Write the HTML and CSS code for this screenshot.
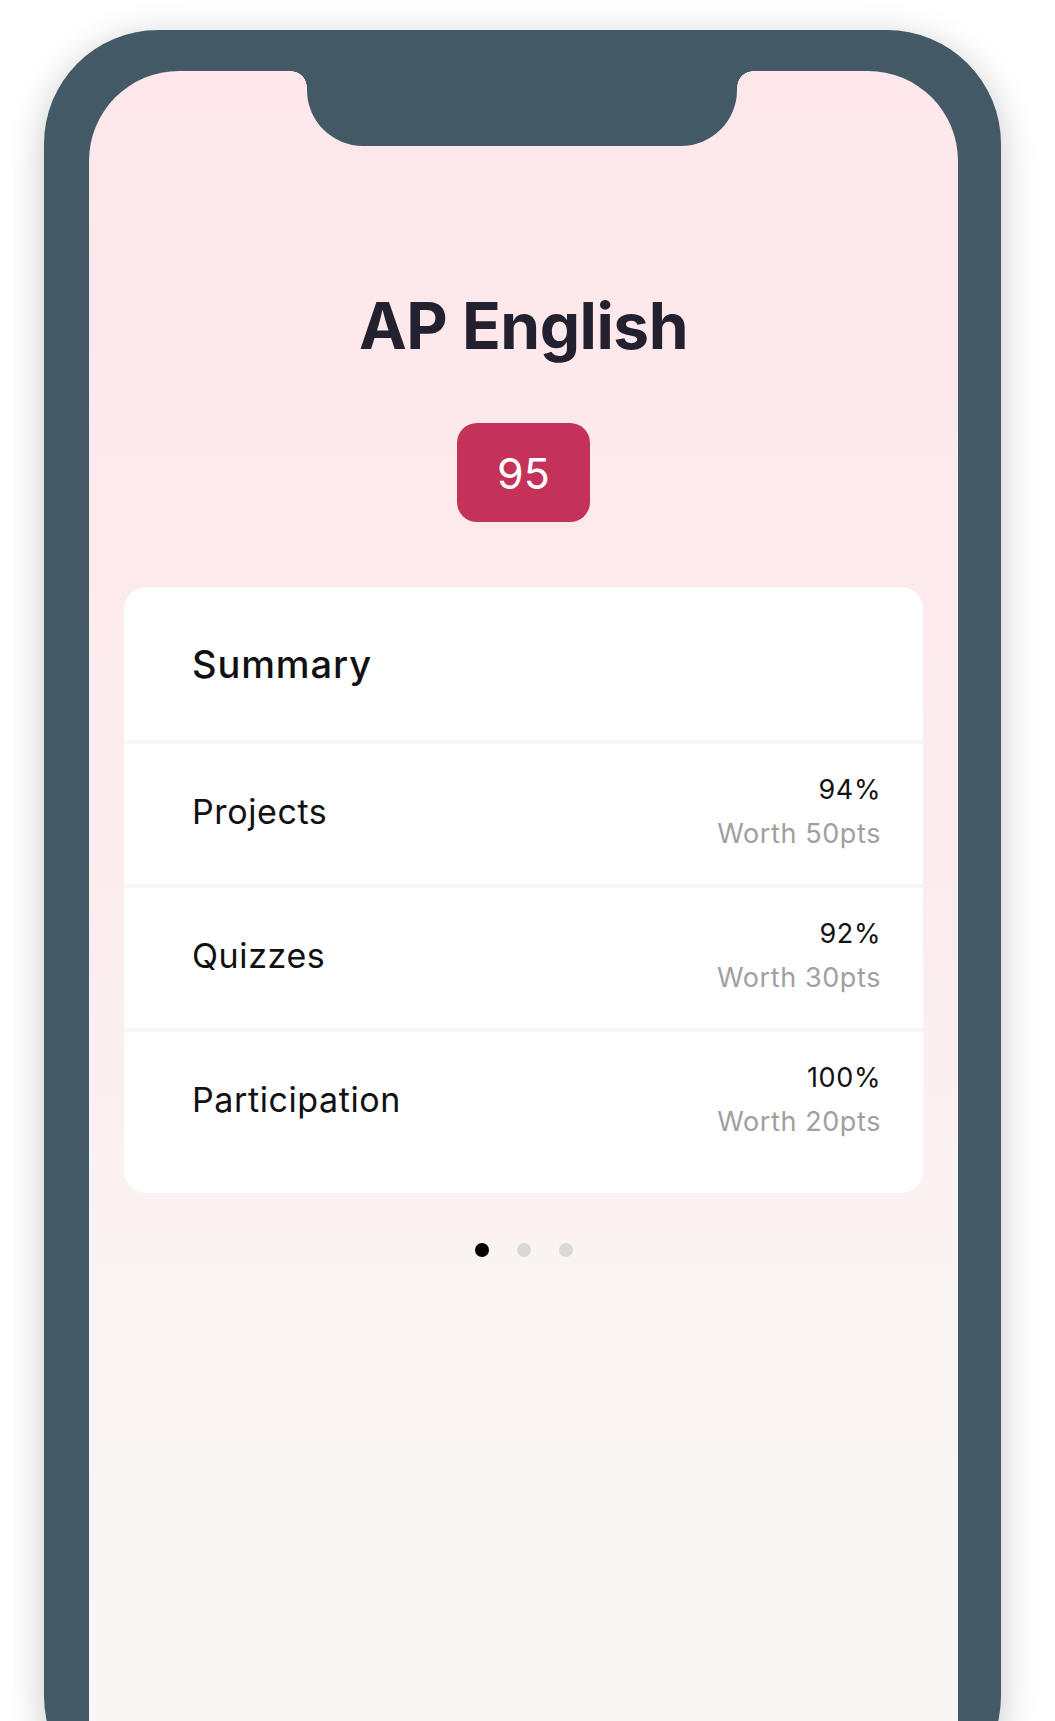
FILE: index.html
```html
<!DOCTYPE html>
<html lang="en">
<head>
<meta charset="utf-8">
<title>AP English</title>
<link rel="stylesheet" href="styles.css">
</head>
<body>
<div class="phone">
  <div class="screen">
    <div class="notch"></div>
    <h1 class="title">AP English</h1>
    <div class="badge">95</div>
    <section class="card">
      <div class="card-head">Summary</div>
      <div class="row">
        <span class="label">Projects</span>
        <div class="meta"><span class="pct">94%</span><span class="worth">Worth 50pts</span></div>
      </div>
      <div class="row">
        <span class="label">Quizzes</span>
        <div class="meta"><span class="pct">92%</span><span class="worth">Worth 30pts</span></div>
      </div>
      <div class="row">
        <span class="label">Participation</span>
        <div class="meta"><span class="pct">100%</span><span class="worth">Worth 20pts</span></div>
      </div>
    </section>
    <div class="dots">
      <span class="dot active"></span>
      <span class="dot"></span>
      <span class="dot"></span>
    </div>
  </div>
</div>
</body>
</html>
```

FILE: styles.css
```css
html, body {
  margin: 0;
  padding: 0;
  height: 1721px;
  overflow: hidden;
  background: #ffffff;
  font-family: Inter, "Noto Sans", sans-serif;
}

.phone {
  margin: 30px 0 0 44px;
  width: 957px;
  height: 1780px;
  box-sizing: border-box;
  padding: 41px 43px 0 45px;
  background: #435a66;
  border-radius: 114px;
  box-shadow: 0 8px 36px rgba(0, 0, 0, 0.22);
}

.screen {
  position: relative;
  height: 100%;
  border-radius: 90px;
  background: linear-gradient(180deg, #fde7ea 0%, #fceced 45%, #faf4f3 70%, #f9f7f6 100%);
  display: flex;
  flex-direction: column;
  align-items: center;
}

.notch {
  position: absolute;
  top: 0;
  left: 218px;
  width: 430px;
  height: 75px;
  background: #435a66;
  border-radius: 0 0 56px 56px;
}
.notch::before,
.notch::after {
  content: "";
  position: absolute;
  top: 0;
  width: 16px;
  height: 16px;
}
.notch::before {
  left: -16px;
  background: radial-gradient(circle at 0 100%, transparent 15.5px, #435a66 16px);
}
.notch::after {
  right: -16px;
  background: radial-gradient(circle at 100% 100%, transparent 15.5px, #435a66 16px);
}

.title {
  margin: 215px 0 0;
  font-size: 64px;
  line-height: 80px;
  font-weight: 700;
  color: #23202f;
  letter-spacing: -0.5px;
}

.badge {
  margin-top: 57px;
  width: 133px;
  height: 99px;
  border-radius: 20px;
  background: #c43159;
  color: #ffffff;
  font-size: 43px;
  display: flex;
  align-items: center;
  justify-content: center;
}

.card {
  margin-top: 65px;
  align-self: stretch;
  margin-left: 35px;
  margin-right: 35px;
  background: #ffffff;
  border-radius: 22px;
  padding-bottom: 21px;
}

.card-head {
  height: 153px;
  box-sizing: border-box;
  padding-left: 68px;
  display: flex;
  align-items: center;
  font-size: 38px;
  font-weight: 500;
  letter-spacing: 0.9px;
  color: #111111;
}

.row {
  height: 144px;
  box-sizing: border-box;
  border-top: 4px solid #fbf5f5;
  padding: 0 42px 0 68px;
  display: flex;
  align-items: center;
  justify-content: space-between;
}

.label {
  font-size: 34px;
  letter-spacing: 0.6px;
  color: #111111;
  margin-bottom: 6px;
}

.meta {
  display: flex;
  flex-direction: column;
  align-items: flex-end;
  font-size: 27px;
  line-height: 44px;
  letter-spacing: 0.6px;
  margin-bottom: 4px;
}
.pct { color: #111111; }
.worth { color: #a0a0a0; }

.dots {
  margin-top: 50px;
  display: flex;
  gap: 28px;
}
.dot {
  width: 14px;
  height: 14px;
  border-radius: 50%;
  background: #d9d9d9;
}
.dot.active { background: #000000; }
```
